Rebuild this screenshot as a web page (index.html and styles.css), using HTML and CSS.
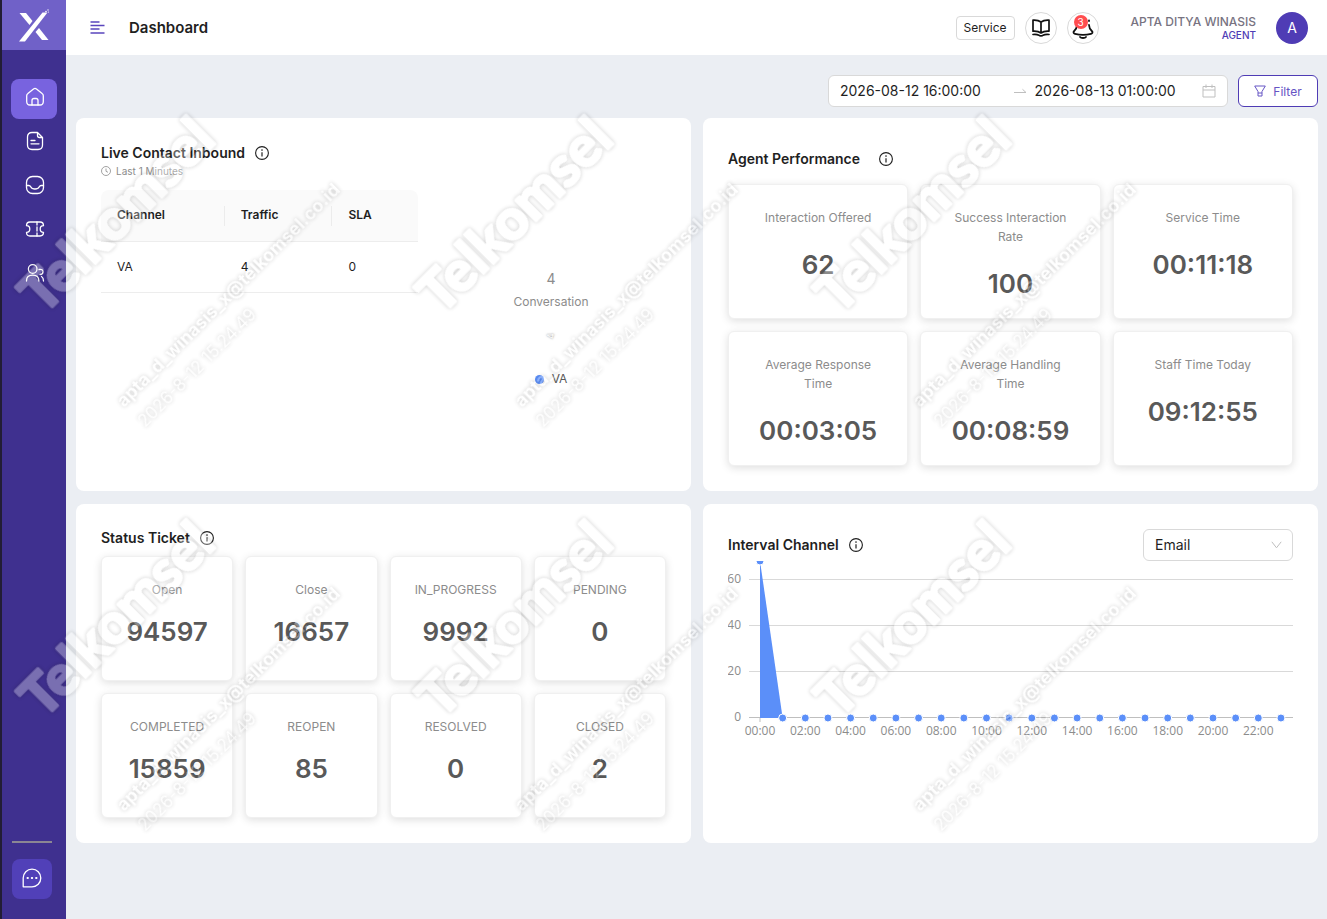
FILE: index.html
```html
<!DOCTYPE html>
<html lang="en">
<head>
<meta charset="utf-8">
<meta name="viewport" content="width=device-width, initial-scale=1">
<title>Dashboard</title>
<link rel="stylesheet" href="styles.css">
</head>
<body>
<svg class="defs" aria-hidden="true">
  <symbol id="info" viewBox="0 0 14 14"><circle cx="7" cy="7" r="6.4" fill="none" stroke="currentColor" stroke-width="1.1"/><path d="M7 6.2v4.2" stroke="currentColor" stroke-width="1.2"/><circle cx="7" cy="4.1" r=".8" fill="currentColor"/></symbol>
</svg>
<div class="app">
  <aside class="sidebar">
    <a class="logo" href="#" aria-label="Home page">
      <svg width="64" height="50" viewBox="2 0 64 50" fill="#fff"><path d="M19 41.500 42.500 12.500h5L25 41.500z"/><path d="M19.500 13h6.500l6.500 8-3 4z"/><path d="M35.500 32l3.500-4 9.500 12h-6.500z"/><circle cx="46" cy="11.500" r=".8"/><circle cx="48" cy="10" r=".7"/><circle cx="48.500" cy="12" r=".6"/></svg>
    </a>
    <nav class="nav" aria-label="Main">
      <a class="nav-item active" href="#" aria-label="Dashboard"><svg width="20" height="20" viewBox="0 0 20 20"><path d="M1.700 8.800c0-1 .4-1.800 1.200-2.400L8.500 2c.9-.7 2.100-.7 3 0l5.600 4.400c.8.600 1.200 1.400 1.200 2.400v5.700c0 2-1.300 3.500-3.300 3.500H5c-2 0-3.300-1.500-3.300-3.500z"/><path d="M7 18v-4.500c0-1.200.8-2 2-2h2c1.200 0 2 .8 2 2V18"/></svg></a>
      <a class="nav-item" href="#" aria-label="Reports"><svg width="20" height="20" viewBox="0 0 20 20"><path d="M12.500 1.500H7C4 1.500 2.500 3 2.500 6v8c0 3 1.500 4.500 4.500 4.500h6c3 0 4.500-1.500 4.500-4.500V6.500zM12.500 1.500v3c0 1.300.7 2 2 2h3M6 9.500h4M6 12.800h8"/></svg></a>
      <a class="nav-item" href="#" aria-label="Inbox"><svg width="20" height="20" viewBox="0 0 20 20"><rect x="1.500" y="1.500" width="17" height="17" rx="6"/><path d="M1.500 10.500h2.300c.9 0 1.500.4 1.900 1.200.8 1.600 1.900 2.300 4.300 2.300s3.500-.7 4.300-2.300c.4-.8 1-1.200 1.900-1.200h2.300"/></svg></a>
      <a class="nav-item" href="#" aria-label="Tickets"><svg width="20" height="20" viewBox="0 0 20 20"><path d="M5 3h10c2.300 0 3.500 1 3.500 3.700a3.300 3.300 0 0 0 0 6.600c0 2.700-1.200 3.700-3.500 3.700H5c-2.300 0-3.500-1-3.500-3.700a3.300 3.300 0 0 0 0-6.600C1.500 4 2.700 3 5 3z"/><path d="M12 3v3M12 8v4M12 14v3"/></svg></a>
      <a class="nav-item" href="#" aria-label="Users"><svg width="20" height="20" viewBox="0 0 20 20"><circle cx="7.700" cy="6" r="4.300"/><path d="M1.500 18c0-4 2-5.800 6.200-5.800s6.200 1.800 6.200 5.800M14 6.500c2.700-.6 4 .6 4 2.200 0 1.700-1.200 2.800-3 2.800M16.500 13.500c1.300.7 2 2 2 4.500"/></svg></a>
    </nav>
    <div class="sidebar-foot">
      <button class="chat" type="button" aria-label="Chat"><svg width="20" height="20" viewBox="0 0 20 20"><path d="M1.200 18.800V10A8.800 8.800 0 1 1 10 18.800z"/><path d="M5.500 10h.4M9.800 10h.4M14.100 10h.4" stroke-width="2"/></svg></button>
    </div>
  </aside>

  <div class="main">
    <header class="topbar">
      <button class="menu" type="button" aria-label="Toggle menu"><svg width="15" height="13" viewBox="0 0 15 13" fill="none" stroke="#5a45bd" stroke-width="1.300"><path d="M.5 1h9M.5 4.500h14M.5 8h9M.5 12h14"/></svg></button>
      <h1>Dashboard</h1>
      <div class="tools">
        <button class="service" type="button">Service</button>
        <button class="round" type="button" aria-label="Guide"><svg width="20" height="20" viewBox="0 0 20 20" fill="none" stroke="#111" stroke-width="1.700" stroke-linejoin="round" stroke-linecap="round"><path d="M10 4C8 2.500 5 2 2 2.200v11c3-.2 6 .3 8 1.800 2-1.500 5-2 8-1.800v-11C15 2 12 2.500 10 4zM10 4v11M2 16.500c2.500-.3 4.500 0 6 .8.700.8 3.300.8 4 0 1.500-.8 3.500-1.100 6-.8"/></svg></button>
        <button class="round" type="button" aria-label="Notifications, 3 unread"><svg width="22" height="22" viewBox="0 0 22 22" fill="none" stroke="#111" stroke-width="1.800" stroke-linecap="round"><path d="M5 8c-.2 3.500-1 4.500-2.800 6-1.300 1.300-.7 2.400.8 2.800 4.500 1.100 11.500 1.100 16 0 1.500-.4 2.100-1.500.8-2.800C18 12.500 17.200 11.500 17 8"/><path d="M17 3.500v.5"/><path d="M8 20c1 1.300 5 1.300 6 0"/></svg><span class="badge">3</span></button>
        <div class="user"><strong>APTA DITYA WINASIS</strong><span>AGENT</span></div>
        <div class="avatar">A</div>
      </div>
    </header>

    <main class="content">
      <form class="filters">
        <div class="range">
          <input type="text" aria-label="Start date" value="2026-08-12 16:00:00">
          <svg width="14" height="14" viewBox="0 0 14 14" fill="none" stroke="#bfbfbf"><path d="M1 8.500h12L9.500 5.300"/></svg>
          <input type="text" aria-label="End date" value="2026-08-13 01:00:00">
          <svg width="14" height="14" viewBox="0 0 14 14" fill="none" stroke="#bfbfbf"><path d="M1 2.500h12v10.500H1zM1 6h12M4 .5v3.500M10 .5v3.500"/></svg>
        </div>
        <button class="filter" type="button"><svg width="12" height="12" viewBox="0 0 12 12" fill="none" stroke="currentColor" stroke-linejoin="round"><path d="M.7 1h10.600L8 6.500v4.500H4V6.500zM4 8h4"/></svg>Filter</button>
      </form>

      <div class="grid">
        <section class="card live">
          <h2>Live Contact Inbound <svg class="info"><use href="#info"/></svg></h2>
          <p class="sub"><svg width="10" height="10" viewBox="0 0 10 10" fill="none" stroke="currentColor" stroke-width=".8"><circle cx="5" cy="5" r="4.500"/><path d="M5 2.500V5.300l2 1"/></svg>Last 1 Minutes</p>
          <div class="live-body">
            <table>
              <thead><tr><th>Channel</th><th>Traffic</th><th>SLA</th></tr></thead>
              <tbody><tr><td>VA</td><td>4</td><td>0</td></tr></tbody>
            </table>
            <div class="donut">
              <span class="donut-num">4</span>
              <span class="donut-label">Conversation</span>
              <span class="donut-slice">4</span>
              <span class="legend"><i></i>VA</span>
            </div>
          </div>
        </section>

        <section class="card agent">
          <h2 class="wide">Agent Performance <svg class="info"><use href="#info"/></svg></h2>
          <div class="stats three">
            <div class="stat"><h3>Interaction Offered</h3><b>62</b></div>
            <div class="stat"><h3>Success Interaction Rate</h3><b>100</b></div>
            <div class="stat"><h3>Service Time</h3><b>00:11:18</b></div>
            <div class="stat"><h3>Average Response Time</h3><b>00:03:05</b></div>
            <div class="stat"><h3>Average Handling Time</h3><b>00:08:59</b></div>
            <div class="stat"><h3>Staff Time Today</h3><b>09:12:55</b></div>
          </div>
        </section>

        <section class="card tickets">
          <h2>Status Ticket <svg class="info"><use href="#info"/></svg></h2>
          <div class="stats four">
            <div class="stat"><h3>Open</h3><b>94597</b></div>
            <div class="stat"><h3>Close</h3><b>16657</b></div>
            <div class="stat"><h3>IN_PROGRESS</h3><b>9992</b></div>
            <div class="stat"><h3>PENDING</h3><b>0</b></div>
            <div class="stat"><h3>COMPLETED</h3><b>15859</b></div>
            <div class="stat"><h3>REOPEN</h3><b>85</b></div>
            <div class="stat"><h3>RESOLVED</h3><b>0</b></div>
            <div class="stat"><h3>CLOSED</h3><b>2</b></div>
          </div>
        </section>

        <section class="card interval">
          <div class="card-head">
            <h2>Interval Channel <svg class="info"><use href="#info"/></svg></h2>
            <div class="select"><select aria-label="Channel"><option>Email</option></select><svg width="11" height="8" viewBox="0 0 11 8" fill="none" stroke="#bfbfbf"><path d="M.8.800 5.500 6.800 10.200.800"/></svg></div>
          </div>
          <svg class="chart" id="chart" viewBox="0 0 565 180" role="img" aria-label="Interactions per hour"></svg>
        </section>
      </div>
    </main>
  </div>
</div>
<svg class="watermark" id="watermark" aria-hidden="true"></svg>
<script src="app.js"></script>
</body>
</html>
```
FILE: styles.css
```css
* { box-sizing: border-box; }
body {
  margin: 0;
  font-family: Inter, "Liberation Sans", sans-serif;
  font-size: 14px;
  color: #1f1f1f;
  background: #ebeef3;
}
h1, h2, h3, p { margin: 0; }
button, input, select { font: inherit; color: inherit; }
button { cursor: pointer; padding: 0; }
.defs { position: absolute; width: 0; height: 0; }
.app { display: flex; min-height: 100vh; }

.sidebar {
  display: flex;
  flex-direction: column;
  width: 66px;
  flex: none;
  background: #3f308f;
  border-left: 2px solid #221d35;
}
.logo { display: block; height: 50px; background: #7061c8; }
.logo svg { display: block; }
.nav {
  display: flex;
  flex-direction: column;
  gap: 4px;
  padding: 29px 9px 0;
}
.nav-item {
  display: flex;
  align-items: center;
  justify-content: center;
  height: 40px;
  padding: 0 0 4px 2px;
  border-radius: 8px;
}
.nav-item.active { background: #7863df; }
.nav-item svg, .chat svg {
  fill: none;
  stroke: #fff;
  stroke-width: 1.3;
  stroke-linecap: round;
  stroke-linejoin: round;
}
.sidebar-foot {
  width: 40px;
  margin: auto 0 20px 10px;
  padding-top: 16px;
  border-top: 2px solid #8b8693;
}
.chat {
  display: flex;
  align-items: center;
  justify-content: center;
  width: 40px;
  height: 40px;
  padding-bottom: 2px;
  border: 0;
  border-radius: 8px;
  background: #5140b8;
}

.main { flex: 1; min-width: 0; }
.topbar {
  display: flex;
  align-items: center;
  height: 55px;
  padding: 0 19px 0 24px;
  background: #fff;
}
.menu { display: flex; border: 0; background: none; }
h1 { margin-left: 24px; font-size: 15px; line-height: 20px; font-weight: 600; }
.tools { display: flex; align-items: center; margin-left: auto; }
.service {
  height: 24px;
  width: 59px;
  margin-right: 10px;
  border: 1px solid #d9d9d9;
  border-radius: 4px;
  background: #fff;
  font-size: 12px;
}
.round {
  position: relative;
  display: flex;
  align-items: center;
  justify-content: center;
  width: 32px;
  height: 32px;
  margin-right: 10px;
  border: 1px solid #d9d9d9;
  border-radius: 50%;
  background: #fff;
}
.badge {
  position: absolute;
  top: 2px;
  left: 6px;
  width: 14px;
  height: 14px;
  border-radius: 50%;
  background: #ff4d4f;
  color: #fff;
  font-size: 10px;
  line-height: 14px;
}
.user {
  display: flex;
  flex-direction: column;
  align-items: flex-end;
  margin: 0 20px 0 22px;
  padding-top: 1px;
  font-size: 10px;
  line-height: 13px;
  font-weight: 500;
  color: #4f3cb5;
}
.user strong { font-size: 12px; line-height: 14px; font-weight: 500; color: #777381; }
.avatar {
  width: 32px;
  height: 32px;
  border-radius: 50%;
  background: #4f3cb5;
  color: #fff;
  line-height: 32px;
  text-align: center;
}

.content { padding: 20px 9px 20px 10px; }
.filters { display: flex; justify-content: flex-end; gap: 10px; margin-bottom: 11px; }
.range {
  display: flex;
  align-items: center;
  width: 400px;
  height: 32px;
  padding: 0 11px;
  border: 1px solid #d9d9d9;
  border-radius: 6px;
  background: #fff;
}
.range input { flex: 1; min-width: 0; padding: 0 0 2px; border: 0; background: none; outline: 0; }
.range svg { flex: none; margin-right: 8px; }
.range svg:last-child { margin-right: 0; }
.range input:first-child { flex-grow: 1.03; }
.filter {
  display: flex;
  align-items: center;
  justify-content: center;
  gap: 7px;
  width: 80px;
  height: 32px;
  border: 1px solid #4f3cb5;
  border-radius: 6px;
  background: #fff;
  color: #6554c4;
  font-size: 12px;
}

.grid { display: grid; grid-template-columns: 1fr 1fr; gap: 13px 12px; }
.card { padding: 24px 25px 25px; border-radius: 8px; background: #fff; min-width: 0; }
h2 { display: flex; align-items: center; gap: 10px; font-size: 14px; line-height: 22px; font-weight: 600; }
h2.wide { gap: 19px; }
.info { width: 14px; height: 14px; }
.sub { display: flex; align-items: center; gap: 5px; color: #8c8c8c; font-size: 10px; line-height: 14px; }
.live-body { display: grid; grid-template-columns: 317px 1fr; align-items: start; margin-top: 12px; }
table { border-collapse: separate; border-spacing: 0; table-layout: fixed; width: 100%; font-size: 12px; }
th, td { height: 51px; padding: 0 16px 1px; text-align: left; border-bottom: 1px solid #ededed; }
th { height: 52px; padding-bottom: 3px; background: linear-gradient(#ececec, #ececec) right center / 1px 20px no-repeat #fafafa; font-weight: 600; }
th:nth-child(1) { width: 39%; border-top-left-radius: 8px; }
th:nth-child(2) { width: 34%; }
th:last-child { background: #fafafa; border-top-right-radius: 8px; }
.donut {
  display: flex;
  flex-direction: column;
  align-items: center;
  padding: 78px 0 0 18px;
  color: #8c8c8c;
}
.donut-num { line-height: 22px; }
.donut-label { margin-bottom: 16px; font-size: 12px; line-height: 24px; }
.donut-slice { color: #fff; font-size: 9px; line-height: 12px; text-shadow: 0 0 2px #777; transform: rotate(-90deg); }
.legend { display: flex; align-items: center; gap: 8px; margin-top: 27px; font-size: 12px; line-height: 20px; color: #595959; }
.legend i { width: 9px; height: 9px; border-radius: 50%; background: #5b8ff9; }

.agent { padding-top: 30px; }
.stats { display: grid; gap: 12px; }
.three { grid-template-columns: repeat(3, 1fr); margin-top: 14px; }
.four { grid-template-columns: repeat(4, 1fr); margin-top: 7px; }
.stat {
  display: flex;
  flex-direction: column;
  align-items: center;
  height: 135px;
  padding: 23px 24px 0;
  border: 1px solid #f0f0f0;
  border-radius: 6px;
  background: #fff;
  box-shadow: 0 2px 8px rgba(0, 0, 0, .13);
  text-align: center;
}
.four .stat { height: 125px; padding: 23px 8px 0; }
.stat h3 { font-size: 12px; line-height: 19px; font-weight: 400; color: #8c8c8c; }
.stat b { margin-top: 20px; font-size: 26px; line-height: 36px; font-weight: 600; color: #595959; }
.four .stat b { margin-top: 15px; }
.tickets { padding-top: 23px; }
.interval { padding-top: 25px; }

.card-head { display: flex; align-items: center; justify-content: space-between; }
.select { position: relative; width: 150px; }
.select select {
  display: block;
  width: 100%;
  height: 32px;
  padding: 0 11px 2px;
  border: 1px solid #d9d9d9;
  border-radius: 6px;
  background: #fff;
  appearance: none;
}
.select svg { position: absolute; right: 11px; top: 12px; pointer-events: none; }
.chart { display: block; width: 100%; }
.chart text { font-family: "Open Sans", "Noto Sans", sans-serif; font-size: 12px; fill: #8c8c8c; }
.chart .y { text-anchor: end; }
.chart .x { text-anchor: middle; }
.gridline { stroke: #d9d9d9; }
.axis { stroke: #bfbfbf; }
.area { fill: #5b8ff9; }
.dot { fill: #5b8ff9; stroke: #fff; }

.watermark { position: absolute; top: 0; left: 0; width: 100%; height: 100%; pointer-events: none; }
.watermark g { opacity: .3; }
.watermark text { fill: #fff; filter: drop-shadow(0 0 2px rgba(0, 0, 0, .65)); }
.brand {
  font-family: Lato, sans-serif;
  font-size: 56px;
  font-weight: 700;
  stroke: #fff;
  stroke-width: 3px;
  stroke-linejoin: round;
}
.mail { font-size: 18px; font-weight: 700; }
.stamp { font-size: 17px; font-weight: 400; }
```
FILE: app.js
```js
const NS = 'http://www.w3.org/2000/svg';

function add(parent, name, attrs, text) {
  const el = document.createElementNS(NS, name);
  Object.entries(attrs).forEach(([key, value]) => el.setAttribute(key, value));
  if (text !== undefined) el.textContent = text;
  parent.appendChild(el);
  return el;
}

// Hourly area chart
const chart = document.getElementById('chart');
const baseline = 157;
[60, 40, 20, 0].forEach((value) => {
  const y = baseline - value * 2.3;
  add(chart, 'text', { x: 13, y: y + 3, class: 'y' }, value);
  add(chart, 'line', { x1: 21, x2: 565, y1: y - 0.5, y2: y - 0.5, class: value ? 'gridline' : 'axis' });
});
const xOf = (hour) => 32 + hour * 22.65;
add(chart, 'line', { x1: 32, x2: 32, y1: 157, y2: 161, class: 'axis' });
add(chart, 'path', { d: `M32 0L${xOf(1)} ${baseline}H32z`, class: 'area' });
for (let hour = 0; hour < 24; hour += 1) {
  add(chart, 'circle', { cx: xOf(hour), cy: hour ? baseline : 0, r: 4, class: 'dot' });
  if (hour % 2 === 0) {
    add(chart, 'text', { x: xOf(hour), y: 174, class: 'x' }, `${String(hour).padStart(2, '0')}:00`);
  }
}

// Repeated diagonal watermark
const mark = document.getElementById('watermark');
[0, 404].forEach((dy) => {
  [0, 398, 796].forEach((dx) => {
    const g = add(mark, 'g', { transform: `translate(${dx} ${dy})` });
    add(g, 'text', { class: 'brand', transform: 'translate(43 316) rotate(-45)' }, 'Telkomsel');
    add(g, 'text', { class: 'mail', transform: 'translate(124 408) rotate(-45)' }, 'apta_d_winasis_x@telkomsel.co.id');
    add(g, 'text', { class: 'stamp', transform: 'translate(145 428) rotate(-45)' }, '2026-8-12 15.24.49');
  });
});
```
